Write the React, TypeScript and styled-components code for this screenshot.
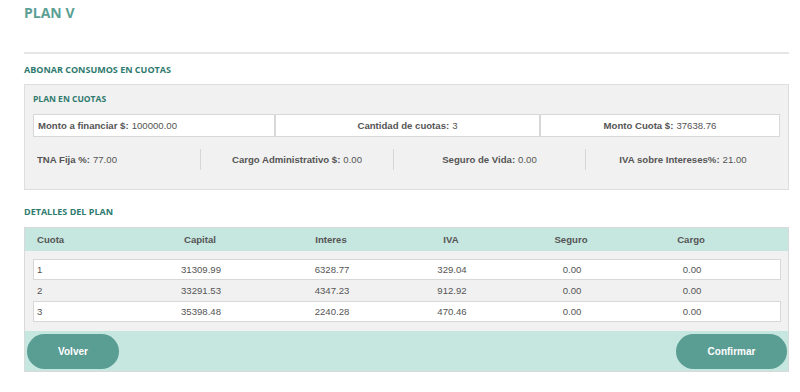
import React from "react";
import styled, { createGlobalStyle } from "styled-components";

const GlobalStyle = createGlobalStyle`
  body {
    margin: 0;
    background: #ffffff;
    font-family: "Liberation Sans", Arial, sans-serif;
  }
`;

const Page = styled.div`
  width: 765px;
  padding: 4px 0 0 24px;
`;

const Title = styled.h1`
  margin: 0;
  height: 18px;
  font-family: "Open Sans", sans-serif;
  font-size: 14px;
  font-weight: 700;
  line-height: 18px;
  color: #5c9f95;
`;

const Rule = styled.hr`
  margin: 30px 0 0;
  border: none;
  border-top: 2px solid #e6e6e6;
`;

const SectionTitle = styled.h2<{ $top: number }>`
  margin: ${({ $top }) => $top}px 0 0;
  height: 12px;
  font-family: "Open Sans", sans-serif;
  font-size: 9px;
  font-weight: 700;
  line-height: 12px;
  color: #2f7a6f;
`;

const Panel = styled.div`
  margin-top: 8px;
  height: 104px;
  padding: 0 8px;
  background: #f1f1f1;
  border: 1px solid #dedede;
`;

const PanelTitle = styled.div`
  margin-top: 8px;
  height: 12px;
  font-family: "Open Sans", sans-serif;
  font-size: 8.5px;
  font-weight: 700;
  line-height: 12px;
  color: #2f7a6f;
`;

const BoxRow = styled.div`
  margin-top: 9px;
  display: grid;
  grid-template-columns: 240px 265px 1fr;
  height: 23px;
  border: 1px solid #d8d8d8;
  background: #ffffff;
  box-sizing: border-box;
`;

const Box = styled.div<{ $align?: string }>`
  display: flex;
  align-items: center;
  justify-content: ${({ $align }) => $align || "center"};
  padding: 0 4px;
  font-size: 9.6px;
  color: #555;
  & + & {
    border-left: 2px solid #d8d8d8;
  }
`;

const InfoRow = styled.div`
  margin-top: 12px;
  display: grid;
  grid-template-columns: 167px 193px 192px 1fr;
  height: 21px;
`;

const Info = styled.div<{ $align?: string }>`
  display: flex;
  align-items: center;
  justify-content: ${({ $align }) => $align || "center"};
  padding: 0 4px;
  font-size: 9.6px;
  color: #555;
  & + & {
    border-left: 1px solid #d6d6d6;
  }
`;

const Label = styled.b`
  font-weight: 700;
  color: #555;
  margin-right: 3px;
`;

const Table = styled.div`
  margin-top: 9px;
  border: 1px solid #d9d9d9;
  background: #f1f1f1;
`;

const Grid = styled.div`
  display: grid;
  grid-template-columns: 96px 142px 120px 120px 120px 120px 1fr;
`;

const HeadRow = styled(Grid)`
  height: 23px;
  padding: 0 7px 0 8px;
  background: #c6e6e0;
`;

const HeadCell = styled.div<{ $left?: boolean }>`
  display: flex;
  align-items: center;
  justify-content: ${({ $left }) => ($left ? "flex-start" : "center")};
  padding: 0 4px;
  font-size: 9.6px;
  font-weight: 700;
  color: #555;
`;

const Body = styled.div`
  padding: 8px 7px 9px 8px;
`;

const Row = styled(Grid)<{ $white: boolean }>`
  height: 21px;
  box-sizing: border-box;
  background: ${({ $white }) => ($white ? "#ffffff" : "transparent")};
  border: 1px solid ${({ $white }) => ($white ? "#d8d8d8" : "transparent")};
`;

const Cell = styled.div<{ $left?: boolean }>`
  display: flex;
  align-items: center;
  justify-content: ${({ $left }) => ($left ? "flex-start" : "center")};
  padding: 0 3px;
  font-size: 9.6px;
  color: #555;
`;

const Footer = styled.div`
  display: flex;
  justify-content: space-between;
  align-items: center;
  height: 40px;
  padding: 0 1px 0 2px;
  background: #c6e6e0;
`;

const Button = styled.button<{ $w: number }>`
  width: ${({ $w }) => $w}px;
  height: 35px;
  border: none;
  border-radius: 18px;
  background: #5a9d93;
  color: #ffffff;
  font-family: "Liberation Sans", Arial, sans-serif;
  font-size: 10px;
  font-weight: 700;
  cursor: pointer;
`;

const rows = [
  ["1", "31309.99", "6328.77", "329.04", "0.00", "0.00"],
  ["2", "33291.53", "4347.23", "912.92", "0.00", "0.00"],
  ["3", "35398.48", "2240.28", "470.46", "0.00", "0.00"],
];

const heads = ["Cuota", "Capital", "Interes", "IVA", "Seguro", "Cargo"];

const App = () => {
  return (
    <>
      <GlobalStyle />
      <Page>
        <Title>PLAN V</Title>
        <Rule />
        <SectionTitle $top={10}>ABONAR CONSUMOS EN CUOTAS</SectionTitle>
        <Panel>
          <PanelTitle>PLAN EN CUOTAS</PanelTitle>
          <BoxRow>
            <Box $align="flex-start">
              <Label>Monto a financiar $:</Label>100000.00
            </Box>
            <Box>
              <Label>Cantidad de cuotas:</Label>3
            </Box>
            <Box>
              <Label>Monto Cuota $:</Label>37638.76
            </Box>
          </BoxRow>
          <InfoRow>
            <Info $align="flex-start">
              <Label>TNA Fija %:</Label>77.00
            </Info>
            <Info>
              <Label>Cargo Administrativo $:</Label>0.00
            </Info>
            <Info>
              <Label>Seguro de Vida:</Label>0.00
            </Info>
            <Info>
              <Label>IVA sobre Intereses%:</Label>21.00
            </Info>
          </InfoRow>
        </Panel>
        <SectionTitle $top={16}>DETALLES DEL PLAN</SectionTitle>
        <Table>
          <HeadRow>
            {heads.map((h, i) => (
              <HeadCell key={h} $left={i === 0}>
                {h}
              </HeadCell>
            ))}
          </HeadRow>
          <Body>
            {rows.map((r, i) => (
              <Row key={r[0]} $white={i % 2 === 0}>
                {r.map((v, j) => (
                  <Cell key={j} $left={j === 0}>
                    {v}
                  </Cell>
                ))}
              </Row>
            ))}
          </Body>
          <Footer>
            <Button $w={92}>Volver</Button>
            <Button $w={111}>Confirmar</Button>
          </Footer>
        </Table>
      </Page>
    </>
  );
};

export default App;
